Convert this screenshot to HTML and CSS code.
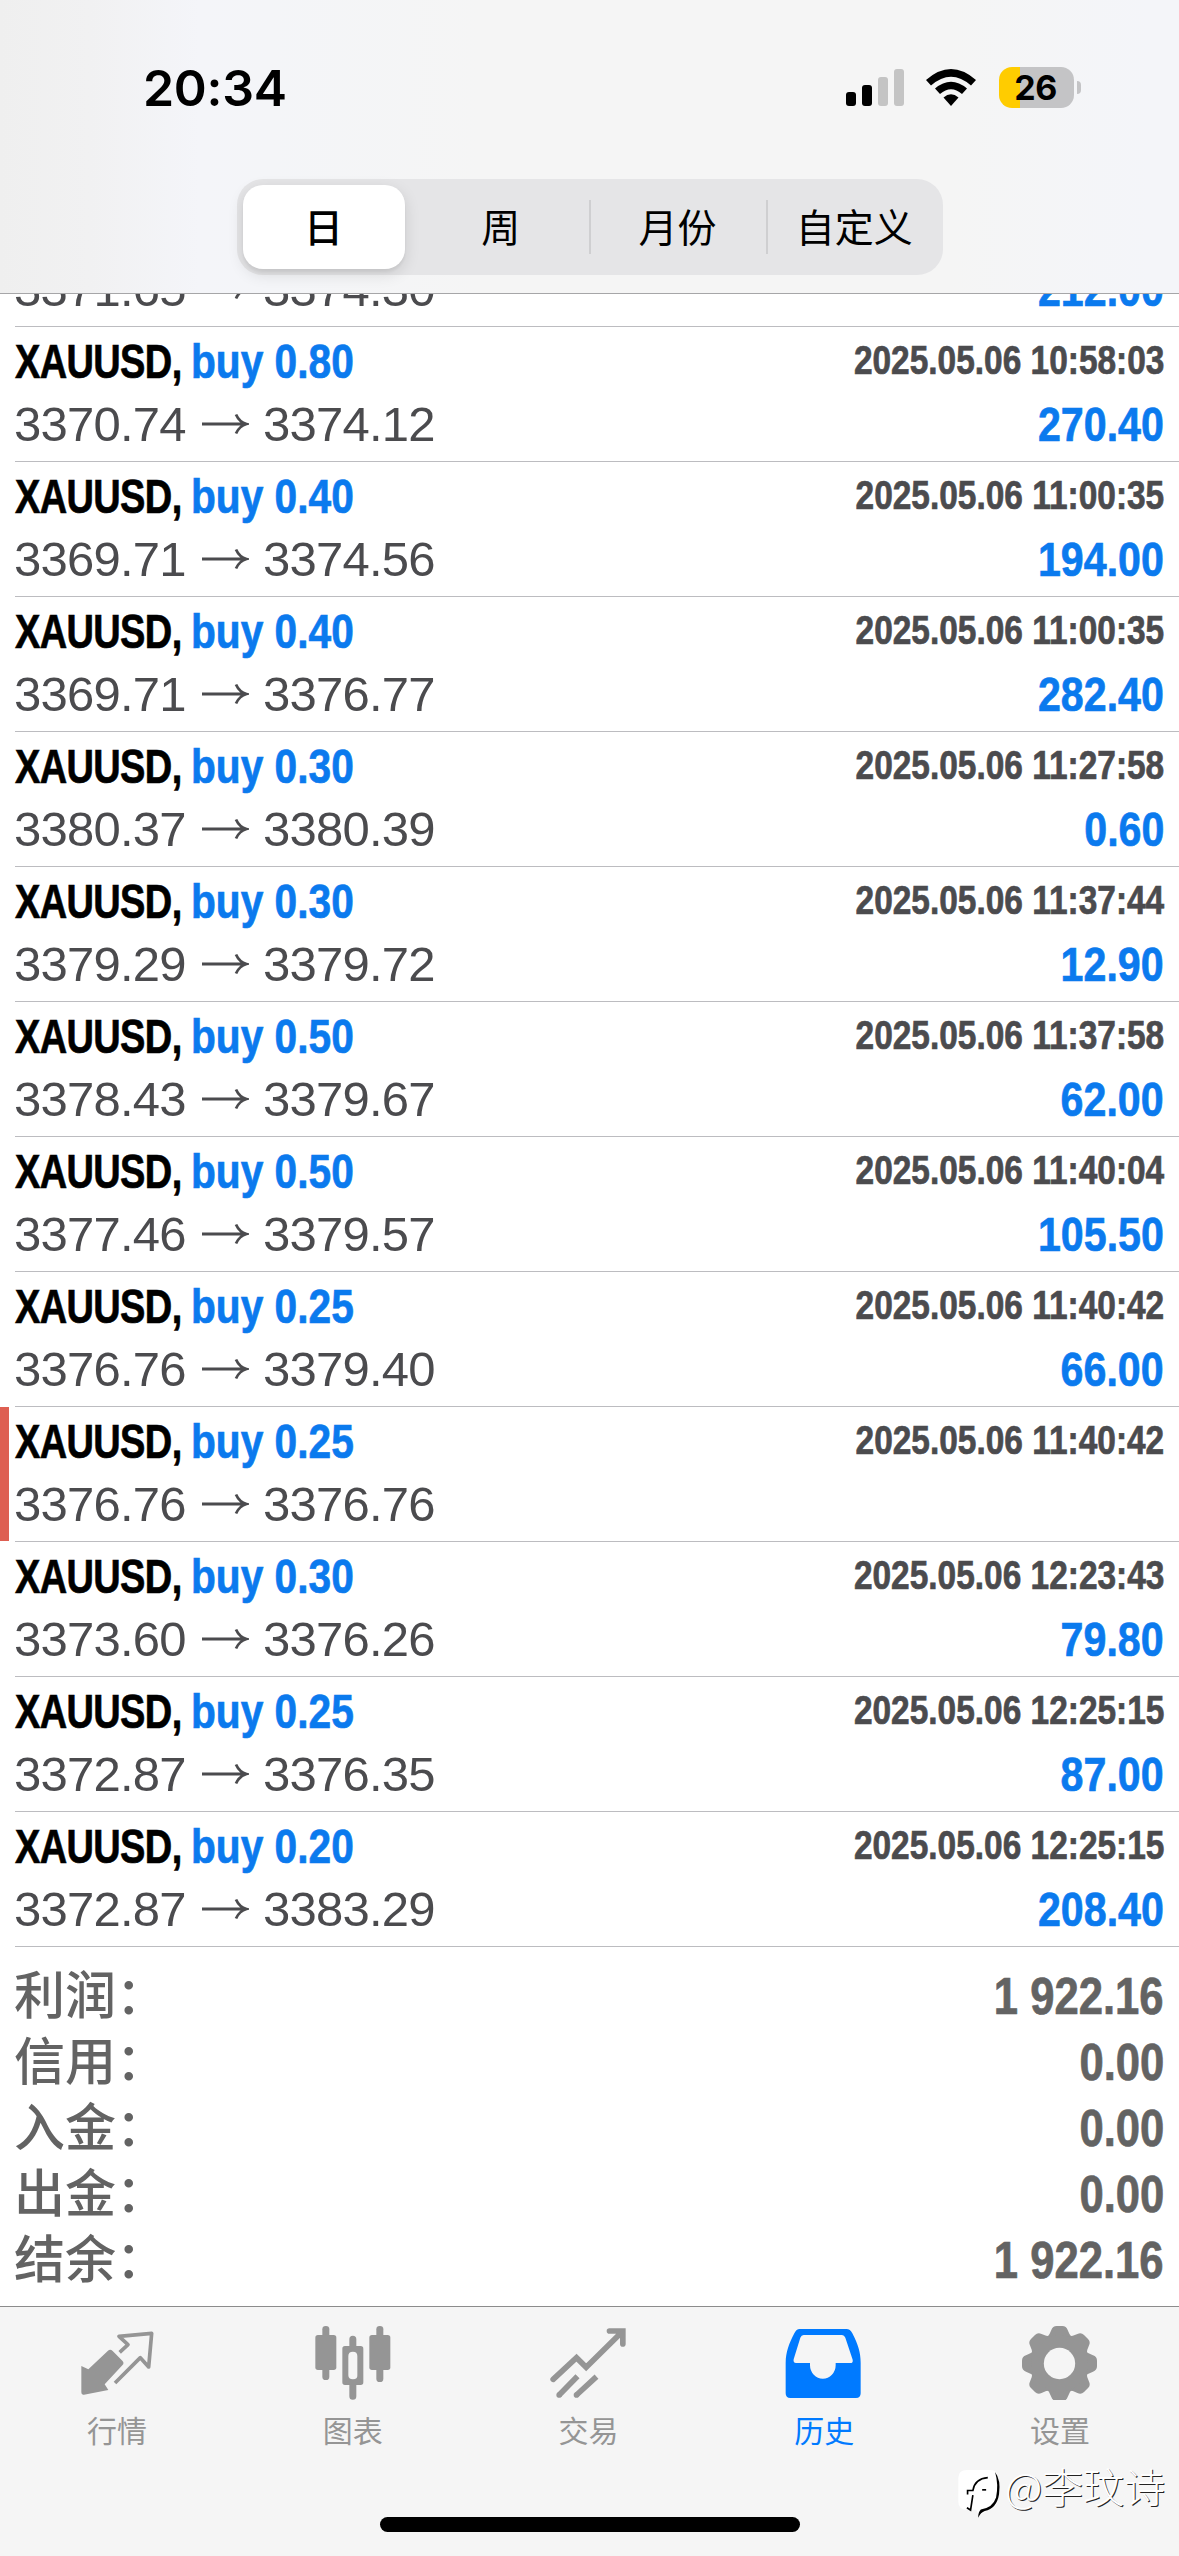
FILE: index.html
```html
<!DOCTYPE html>
<html lang="zh-CN">
<head>
<meta charset="utf-8">
<title>历史</title>
<link rel="stylesheet" href="styles.css">
</head>
<body>
<svg width="0" height="0" class="defs">
  <symbol id="arrow" viewBox="0 0 48 24">
    <path d="M1 12H45M35 2.5C37 7 40 10.5 45.500 12C40 13.500 37 17 35 21.500" fill="none" stroke="currentColor" stroke-width="2.800"/>
  </symbol>
</svg>
<div class="screen">
  <header class="header">
    <div class="status">
      <span class="time">20:34</span>
      <div class="indicators">
        <svg class="signal" viewBox="0 0 58 37">
          <rect x="0" y="23" width="10" height="14" rx="3"/>
          <rect x="16" y="16" width="10" height="21" rx="3"/>
          <rect x="32" y="8" width="10" height="29" rx="3" fill="#c4c4c4"/>
          <rect x="48" y="0" width="10" height="37" rx="3" fill="#c4c4c4"/>
        </svg>
        <svg class="wifi" viewBox="0 0 50 37">
          <path d="M0 11Q25-11 50 11L45 16.500Q25-1 5 16.500Z"/>
          <path d="M9 19.500Q25 6 41 19.500L36 25Q25 15.500 14 25Z"/>
          <path d="M17.500 28.500Q25 22 32.500 28.500L25 37Z"/>
        </svg>
        <div class="battery"><span class="level">26</span></div>
        <div class="nub"></div>
      </div>
    </div>
    <nav class="segments">
      <span class="segment selected">日</span>
      <span class="segment">周</span>
      <span class="segment split">月份</span>
      <span class="segment split">自定义</span>
    </nav>
  </header>

  <main class="history">
    <div class="deal"><div class="line"><span class="name"><b class="symbol">XAUUSD,</b> <b class="side">buy 0.80</b></span><span class="date">2025.05.06 10:56:12</span></div><div class="line"><span class="prices">3371.65<svg class="arrow"><use href="#arrow"/></svg>3374.30</span><span class="profit">212.00</span></div></div>
    <div class="deal"><div class="line"><span class="name"><b class="symbol">XAUUSD,</b> <b class="side">buy 0.80</b></span><span class="date">2025.05.06 10:58:03</span></div><div class="line"><span class="prices">3370.74<svg class="arrow"><use href="#arrow"/></svg>3374.12</span><span class="profit">270.40</span></div></div>
    <div class="deal"><div class="line"><span class="name"><b class="symbol">XAUUSD,</b> <b class="side">buy 0.40</b></span><span class="date">2025.05.06 11:00:35</span></div><div class="line"><span class="prices">3369.71<svg class="arrow"><use href="#arrow"/></svg>3374.56</span><span class="profit">194.00</span></div></div>
    <div class="deal"><div class="line"><span class="name"><b class="symbol">XAUUSD,</b> <b class="side">buy 0.40</b></span><span class="date">2025.05.06 11:00:35</span></div><div class="line"><span class="prices">3369.71<svg class="arrow"><use href="#arrow"/></svg>3376.77</span><span class="profit">282.40</span></div></div>
    <div class="deal"><div class="line"><span class="name"><b class="symbol">XAUUSD,</b> <b class="side">buy 0.30</b></span><span class="date">2025.05.06 11:27:58</span></div><div class="line"><span class="prices">3380.37<svg class="arrow"><use href="#arrow"/></svg>3380.39</span><span class="profit">0.60</span></div></div>
    <div class="deal"><div class="line"><span class="name"><b class="symbol">XAUUSD,</b> <b class="side">buy 0.30</b></span><span class="date">2025.05.06 11:37:44</span></div><div class="line"><span class="prices">3379.29<svg class="arrow"><use href="#arrow"/></svg>3379.72</span><span class="profit">12.90</span></div></div>
    <div class="deal"><div class="line"><span class="name"><b class="symbol">XAUUSD,</b> <b class="side">buy 0.50</b></span><span class="date">2025.05.06 11:37:58</span></div><div class="line"><span class="prices">3378.43<svg class="arrow"><use href="#arrow"/></svg>3379.67</span><span class="profit">62.00</span></div></div>
    <div class="deal"><div class="line"><span class="name"><b class="symbol">XAUUSD,</b> <b class="side">buy 0.50</b></span><span class="date">2025.05.06 11:40:04</span></div><div class="line"><span class="prices">3377.46<svg class="arrow"><use href="#arrow"/></svg>3379.57</span><span class="profit">105.50</span></div></div>
    <div class="deal"><div class="line"><span class="name"><b class="symbol">XAUUSD,</b> <b class="side">buy 0.25</b></span><span class="date">2025.05.06 11:40:42</span></div><div class="line"><span class="prices">3376.76<svg class="arrow"><use href="#arrow"/></svg>3379.40</span><span class="profit">66.00</span></div></div>
    <div class="deal stopped"><div class="line"><span class="name"><b class="symbol">XAUUSD,</b> <b class="side">buy 0.25</b></span><span class="date">2025.05.06 11:40:42</span></div><div class="line"><span class="prices">3376.76<svg class="arrow"><use href="#arrow"/></svg>3376.76</span></div></div>
    <div class="deal"><div class="line"><span class="name"><b class="symbol">XAUUSD,</b> <b class="side">buy 0.30</b></span><span class="date">2025.05.06 12:23:43</span></div><div class="line"><span class="prices">3373.60<svg class="arrow"><use href="#arrow"/></svg>3376.26</span><span class="profit">79.80</span></div></div>
    <div class="deal"><div class="line"><span class="name"><b class="symbol">XAUUSD,</b> <b class="side">buy 0.25</b></span><span class="date">2025.05.06 12:25:15</span></div><div class="line"><span class="prices">3372.87<svg class="arrow"><use href="#arrow"/></svg>3376.35</span><span class="profit">87.00</span></div></div>
    <div class="deal"><div class="line"><span class="name"><b class="symbol">XAUUSD,</b> <b class="side">buy 0.20</b></span><span class="date">2025.05.06 12:25:15</span></div><div class="line"><span class="prices">3372.87<svg class="arrow"><use href="#arrow"/></svg>3383.29</span><span class="profit">208.40</span></div></div>
    <section class="summary">
      <div class="total"><span class="label">利润：</span><span class="value">1 922.16</span></div>
      <div class="total"><span class="label">信用：</span><span class="value">0.00</span></div>
      <div class="total"><span class="label">入金：</span><span class="value">0.00</span></div>
      <div class="total"><span class="label">出金：</span><span class="value">0.00</span></div>
      <div class="total"><span class="label">结余：</span><span class="value">1 922.16</span></div>
    </section>
  </main>

  <footer class="tabs">
    <div class="tab">
      <svg class="icon" viewBox="54 12 240 240">
        <path d="M64 150L85 160L144 104Q151 98 158 105L187 134Q194 141 187 148L134 205L145 222L72 236Q64 238 64 229Z" fill="currentColor"/>
        <path d="M179 109L204 86L177 61L275 52L266 153L241 125L165 201" fill="none" stroke="currentColor" stroke-width="11" stroke-linejoin="round"/>
      </svg>
      <span>行情</span>
    </div>
    <div class="tab">
      <svg class="icon" viewBox="761 12 240 240">
        <g fill="currentColor">
          <rect x="765" y="57" width="63" height="105" rx="8"/>
          <rect x="786" y="30" width="21" height="162" rx="10"/>
          <rect x="927" y="57" width="63" height="105" rx="8"/>
          <rect x="948" y="30" width="21" height="168" rx="10"/>
          <path d="M867 90V70a10.500 10.500 0 0 1 21 0V90H901Q909 90 909 98V199Q909 207 901 207H888V241a10.500 10.500 0 0 1-21 0V207H854Q846 207 846 199V98Q846 90 854 90ZM878 107Q864 107 864 120V178Q864 190 878 190T891 178V120Q891 107 878 107Z" fill-rule="evenodd"/>
        </g>
      </svg>
      <span>图表</span>
    </div>
    <div class="tab">
      <svg class="icon" viewBox="28.5 12 240 240">
        <path d="M41 190L111 125L140 154L248 47M210 45H250V84" fill="none" stroke="currentColor" stroke-width="17" stroke-linecap="round"/>
        <path d="M59 237L114 181M111 237L171 182" fill="none" stroke="currentColor" stroke-width="17"/>
        <circle cx="59" cy="237" r="8.500" fill="currentColor"/><circle cx="111" cy="237" r="8.500" fill="currentColor"/>
      </svg>
      <span>交易</span>
    </div>
    <div class="tab active">
      <svg class="icon" viewBox="736 12 240 240">
        <path d="M780 39H920Q932 39 938 52C955 85 963 110 963 140V232Q963 246 949 246H752Q738 246 738 232V140C738 110 748 82 764 52Q770 39 780 39ZM792 57Q785 57 782 65L762 130Q760 141 769 141H811V148A38.500 40 0 0 0 888 148V141H932Q941 141 939 131L917 65Q914 57 907 57Z" fill="currentColor" fill-rule="evenodd"/>
      </svg>
      <span>历史</span>
    </div>
    <div class="tab">
      <svg class="icon" viewBox="243 12 240 240">
        <defs><path id="tooth" d="M318 68Q330 56 334 42Q338 30 350 30H367Q379 30 383 42Q387 56 399 68L380 110H338Z"/></defs>
        <g fill="currentColor">
          <use href="#tooth"/>
          <use href="#tooth" transform="rotate(45 358.500 142.500)"/>
          <use href="#tooth" transform="rotate(90 358.500 142.500)"/>
          <use href="#tooth" transform="rotate(135 358.500 142.500)"/>
          <use href="#tooth" transform="rotate(180 358.500 142.500)"/>
          <use href="#tooth" transform="rotate(225 358.500 142.500)"/>
          <use href="#tooth" transform="rotate(270 358.500 142.500)"/>
          <use href="#tooth" transform="rotate(315 358.500 142.500)"/>
        </g>
        <circle cx="358.500" cy="142.500" r="66" fill="none" stroke="currentColor" stroke-width="38"/>
        <circle cx="358.500" cy="142.500" r="47" fill="#f5f5f5"/>
      </svg>
      <span>设置</span>
    </div>
  </footer>
  <div class="home-bar"></div>
  <div class="watermark">
    <svg class="mark" viewBox="48 450 140 160">
      <path d="M80 462H150Q174 462 174 486V545Q174 575 145 582L118 600L108 582H80Q54 582 54 558V486Q54 462 80 462Z" fill="#fff"/>
      <path d="M165 468Q183 492 177 535Q170 578 134 586Q122 590 114 606Q114 588 122 581Q158 576 168 545Q176 505 165 468Z"/>
      <path d="M82 536V524H98Q104 488 143 485" fill="none" stroke="#000" stroke-width="5"/>
      <path d="M98 538L91 583L80 576" fill="none" stroke="#000" stroke-width="5"/>
      <path d="M126 522H138" stroke="#000" stroke-width="5"/>
    </svg>
    <span>@李玟诗</span>
  </div>
</div>
</body>
</html>
```
FILE: styles.css
```css
* { box-sizing: border-box; }

body {
  margin: 0;
  background: #fff;
  font-family: "Liberation Sans", "Noto Sans CJK SC", sans-serif;
}

.defs { position: absolute; }

.screen {
  position: relative;
  width: 1179px;
  height: 2556px;
  display: flex;
  flex-direction: column;
  overflow: hidden;
}

/* Header */
.header {
  flex: none;
  height: 294px;
  display: flex;
  flex-direction: column;
  align-items: center;
  border-bottom: 1px solid #a6a6a8;
  background: linear-gradient(90deg, #efefef 0, #f1f1f2 90px, #f4f5f9 200px, #f4f5f8 270px, #f5f5f5 480px, #f5f5f5 950px, #f4f5f9 1150px);
}

.status {
  width: 100%;
  height: 179px;
  padding: 60px 98px 0 143px;
  display: flex;
  justify-content: space-between;
  align-items: flex-start;
}

.time {
  font: 600 50px/56px Inter, sans-serif;
  letter-spacing: -0.3px;
}

.indicators {
  display: flex;
  align-items: center;
  height: 55px;
}

.signal { width: 58px; height: 37px; margin-right: 22px; }
.wifi { width: 50px; height: 37px; margin-right: 23px; }

.battery {
  width: 75px;
  height: 41px;
  border-radius: 13px;
  background: linear-gradient(90deg, #ffcc00 21px, #c4c4c6 21px);
  display: flex;
  justify-content: center;
}

.level {
  font: 700 34px/41px Inter, sans-serif;
  letter-spacing: -0.6px;
  margin-left: -2px;
}

.nub {
  width: 4px;
  height: 13px;
  margin-left: 3px;
  border-radius: 0 4px 4px 0;
  background: #c4c4c6;
}

.segments {
  width: 706px;
  height: 96px;
  padding: 6px 0;
  display: flex;
  border-radius: 26px;
  background: #e5e5e7;
}

.segment {
  flex: 1;
  padding-bottom: 4px;
  display: flex;
  align-items: center;
  justify-content: center;
  font: 400 39px/56px "Noto Sans CJK SC", sans-serif;
}

.split {
  background: linear-gradient(#cfcfd1, #cfcfd1) 0 50% / 2px 54px no-repeat;
}

.selected {
  flex: none;
  width: 162px;
  margin: 0 8px 0 6px;
  border-radius: 20px;
  background: #fff;
  font-weight: 500;
  box-shadow: 0 5px 16px rgba(0, 0, 0, .12), 0 3px 3px rgba(0, 0, 0, .05);
}

/* Deals */
.history {
  height: 2012px;
  display: flex;
  flex-direction: column;
  justify-content: flex-end;
  overflow: hidden;
}

.deal {
  flex: none;
  height: 135px;
  padding: 6px 15px 0;
  display: flex;
  flex-direction: column;
  gap: 7px;
  background: linear-gradient(#bcbcc0, #bcbcc0) 15px 100% / 100% 1px no-repeat;
}

.stopped {
  background:
    linear-gradient(#de5f52, #de5f52) 0 0 / 9px 134px no-repeat,
    linear-gradient(#bcbcc0, #bcbcc0) 15px 100% / 100% 1px no-repeat;
}

.line {
  height: 56px;
  display: flex;
  justify-content: space-between;
  line-height: 56px;
  font-size: 49px;
  white-space: nowrap;
}

.name { display: flex; }

.symbol,
.side,
.date,
.profit,
.value { -webkit-text-stroke: 0.7px currentColor; }

.symbol {
  width: 176px;
  letter-spacing: -0.8px;
  transform: scaleX(.775);
  transform-origin: 0 0;
}

.side {
  color: #0b7aee;
  transform: scaleX(.83);
  transform-origin: 0 0;
}

.date {
  font-size: 40px;
  line-height: 55px;
  font-weight: 700;
  color: #4b4b4e;
  transform: scaleX(.836);
  transform-origin: 100% 0;
}

.prices {
  display: flex;
  align-items: center;
  color: #4b4b4e;
  letter-spacing: -0.75px;
  margin-left: -1px;
}

.arrow {
  width: 48px;
  height: 24px;
  margin: 0 14px 0 15px;
}

.profit {
  font-weight: 700;
  color: #0b7aee;
  transform: scaleX(.84);
  transform-origin: 100% 0;
}

/* Totals */
.summary {
  flex: none;
  height: 359px;
  padding: 16px 15px 0 14px;
  color: #636363;
}

.total {
  height: 66px;
  display: flex;
  justify-content: space-between;
  align-items: flex-start;
}

.label { font: 500 51px/58px "Noto Sans CJK SC", sans-serif; }

.value {
  font-size: 51px;
  line-height: 68px;
  font-weight: 700;
  transform: scaleX(.855);
  transform-origin: 100% 0;
}

/* Tab bar */
.tabs {
  height: 250px;
  padding-top: 13px;
  display: flex;
  border-top: 1px solid #8c8c8c;
  background: #f5f5f5;
}

.tab {
  flex: 1;
  display: flex;
  flex-direction: column;
  align-items: center;
  color: #959595;
  font: 400 30px/44px "Noto Sans CJK SC", sans-serif;
}

.tab span { margin: 7px 2px 0 0; }
.active { color: #007aff; }
.icon { width: 80px; height: 80px; }

.home-bar {
  position: absolute;
  left: 380px;
  top: 2517px;
  width: 420px;
  height: 15px;
  border-radius: 8px;
  background: #000;
}

.watermark {
  position: absolute;
  left: 956px;
  top: 2466px;
  display: flex;
  color: #fff;
  font: 300 41px/46px "Noto Sans CJK SC", sans-serif;
  text-shadow: 1px 1px 0 #222;
}

.watermark span { margin: -4px 0 0 2px; }
.mark { width: 47px; height: 53px; }
```
